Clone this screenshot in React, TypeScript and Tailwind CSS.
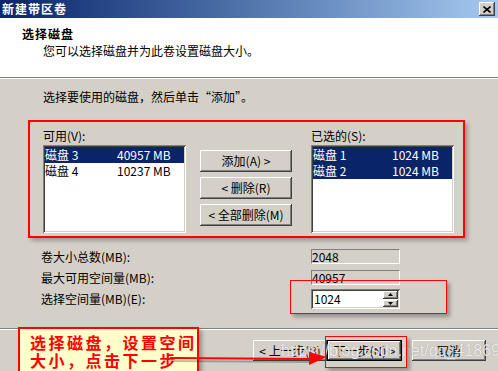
import type { ReactNode } from 'react';

const raised =
  'shadow-[inset_-1px_-1px_0_#404040,inset_1px_1px_0_#ffffff,inset_-2px_-2px_0_#808080,inset_2px_2px_0_#d4d0c8]';
const sunken =
  'shadow-[inset_1px_1px_0_#808080,inset_-1px_-1px_0_#ffffff,inset_2px_2px_0_#404040,inset_-2px_-2px_0_#d4d0c8]';

const Btn = ({ children, className = '' }: { children: ReactNode; className?: string }) => (
  <div className={`flex items-center justify-center bg-[#d4d0c8] text-[12px] leading-[14px] text-black ${raised} ${className}`}>
    {children}
  </div>
);

interface Disk {
  name: string;
  size: string;
}

const DiskList = ({ disks, col, selected }: { disks: Disk[]; col: string; selected: number }) => (
  <div className={`h-[88px] w-[143px] bg-white p-[2px] ${sunken}`}>
    {disks.map((d, i) => (
      <div
        key={d.name}
        className={`flex h-[16px] items-center text-[12px] leading-[16px] ${i < selected ? 'bg-[#0a246a] text-white' : 'text-black'}`}
      >
        <span className={`${col} shrink-0`}>{d.name}</span>
        <span>{d.size}</span>
      </div>
    ))}
  </div>
);

const ReadOnly = ({ value }: { value: string }) => (
  <div className="flex h-[15px] w-[89px] items-center border border-t-[#808080] border-l-[#808080] border-b-white border-r-white text-[12px] leading-[14px]">
    {value}
  </div>
);

export default function App() {
  return (
    <div className="relative h-[371px] w-[498px] overflow-hidden bg-[#d4d0c8] font-['Noto_Sans_CJK_SC',sans-serif] text-black">
      {/* Title bar */}
      <div className="flex h-[18px] items-center justify-between bg-linear-to-r from-[#0a246a] to-[#a6caf0] pl-[2px] pr-[3px]">
        <span className="text-[12px] font-bold leading-[14px] tracking-[1px] text-white">新建带区卷</span>
        <div className={`flex h-[14px] w-[16px] items-center justify-center bg-[#d4d0c8] ${raised}`}>
          <svg width="8" height="7" viewBox="0 0 8 7">
            <path d="M0.5 0.5 L7.5 6.5 M7.5 0.5 L0.5 6.5" stroke="#000" strokeWidth="1.6" />
          </svg>
        </div>
      </div>

      {/* Header */}
      <div className="h-[61px] border-b border-white bg-white">
        <div className="h-[60px] border-b border-[#808080] pt-[9px]">
          <div className="pl-[22px] text-[12px] font-bold leading-[14px] tracking-[1px]">选择磁盘</div>
          <div className="mt-[3px] pl-[43px] text-[12px] leading-[14px]">您可以选择磁盘并为此卷设置磁盘大小。</div>
        </div>
      </div>

      {/* Body */}
      <div className="pt-[11px]">
        <div className="pl-[43px] text-[12px] leading-[14px]">选择要使用的磁盘，然后单击“添加”。</div>

        <div className="ml-[28px] mt-[16px] flex h-[118px] w-[437px] border-2 border-[#ff0000] pl-[13px] pt-[7px] shadow-[3px_3px_4px_rgba(0,0,0,0.25)]">
          <div>
            <div className="h-[14px] text-[12px] leading-[14px]">可用(V):</div>
            <div className="mt-[2px]">
              <DiskList
                col="w-[72px]"
                selected={1}
                disks={[
                  { name: '磁盘 3', size: '40957 MB' },
                  { name: '磁盘 4', size: '10237 MB' },
                ]}
              />
            </div>
          </div>

          <div className="ml-[14px] flex flex-col gap-[5px] pt-[21px]">
            <Btn className="h-[22px] w-[92px]">添加(A) &gt;</Btn>
            <Btn className="h-[22px] w-[92px]">&lt; 删除(R)</Btn>
            <Btn className="h-[22px] w-[92px]">&lt; 全部删除(M)</Btn>
          </div>

          <div className="ml-[19px]">
            <div className="h-[14px] text-[12px] leading-[14px]">已选的(S):</div>
            <div className="mt-[2px]">
              <DiskList
                col="w-[79px]"
                selected={2}
                disks={[
                  { name: '磁盘 1', size: '1024 MB' },
                  { name: '磁盘 2', size: '1024 MB' },
                ]}
              />
            </div>
          </div>
        </div>

        <div className="mt-[8px] pl-[41px] text-[12px] leading-[14px]">
          <div className="flex h-[21px] items-center">
            <span className="w-[270px]">卷大小总数(MB):</span>
            <ReadOnly value="2048" />
          </div>
          <div className="flex h-[21px] items-center">
            <span className="w-[270px]">最大可用空间量(MB):</span>
            <ReadOnly value="40957" />
          </div>
          <div className="flex h-[22px] items-center">
            <span className="w-[270px]">选择空间量(MB)(E):</span>
            <div className={`flex h-[20px] w-[89px] items-center bg-white p-[2px] ${sunken}`}>
              <span className="flex-1 pl-[1px]">1024</span>
              <div className="flex h-[16px] w-[15px] flex-col gap-[1px]">
                <div className={`flex flex-1 items-center justify-center bg-[#d4d0c8] ${raised}`}>
                  <svg width="5" height="3" viewBox="0 0 5 3"><path d="M2.5 0 L5 3 L0 3 Z" fill="#000" /></svg>
                </div>
                <div className={`flex flex-1 items-center justify-center bg-[#d4d0c8] ${raised}`}>
                  <svg width="5" height="3" viewBox="0 0 5 3"><path d="M0 0 L5 0 L2.5 3 Z" fill="#000" /></svg>
                </div>
              </div>
            </div>
          </div>
        </div>

        <div className="mt-[18px] border-t border-[#808080]">
          <div className="border-t border-white" />
        </div>

        <div className="mt-[10px] flex justify-end pr-[12px]">
          <Btn className="h-[21px] w-[74px]">&lt; 上一步(B)</Btn>
          <div className="h-[21px] w-[75px] border border-black">
            <Btn className="h-full w-full">下一步(N) &gt;</Btn>
          </div>
          <Btn className="ml-[10px] h-[21px] w-[74px]">取消</Btn>
        </div>
      </div>

      {/* Watermark */}
      <div className="pointer-events-none absolute left-[281px] top-[342px] whitespace-nowrap font-['Liberation_Sans',sans-serif] text-[16px] leading-[18px] text-white/80 [text-shadow:0_0_1px_rgba(90,90,90,0.6)]">
        https://blog.csdn.net/qq_41869
      </div>

      {/* Annotations */}
      <div className="pointer-events-none absolute left-[290px] top-[280px] h-[34px] w-[157px] border border-[#ff0000] shadow-[3px_3px_4px_rgba(0,0,0,0.3)]" />
      <div className="pointer-events-none absolute left-[325px] top-[336px] h-[32px] w-[82px] border border-[#ff0000] shadow-[3px_3px_4px_rgba(0,0,0,0.3)]" />

      <div className="absolute left-[18px] top-[327px] h-[50px] w-[181px] border-2 border-[#ff0000] bg-[#ffffcc] pl-[10px] pt-[4px] shadow-[3px_3px_4px_rgba(0,0,0,0.3)]">
        <div className="whitespace-nowrap text-[16px] font-bold leading-[18px] tracking-[2.5px] text-[#ff0000]">选择磁盘，设置空间</div>
        <div className="whitespace-nowrap text-[16px] font-bold leading-[18px] tracking-[2.5px] text-[#ff0000]">大小，点击下一步</div>
      </div>

      <svg className="pointer-events-none absolute left-0 top-0" width="498" height="371">
        <path d="M170 361 L312 362" stroke="rgba(0,0,0,0.25)" strokeWidth="2" />
        <path d="M170 358 L312 359" stroke="#ff0000" strokeWidth="2" />
        <path d="M309 352 L327 357 L309 365 Z" fill="#ff0000" />
      </svg>
    </div>
  );
}
